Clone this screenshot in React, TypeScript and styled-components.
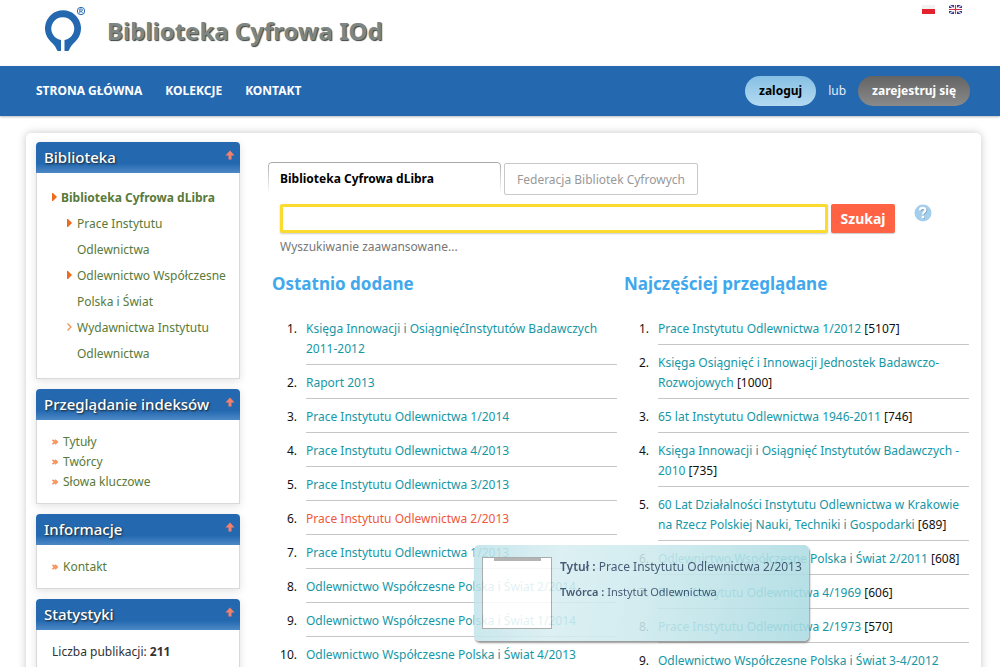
import React from "react";
import styled, { createGlobalStyle, css } from "styled-components";

const GlobalStyle = createGlobalStyle`
  *, *::before, *::after { box-sizing: border-box; }
  body {
    margin: 0;
    background: #fff;
    color: #111;
    font: 12px/20px "Noto Sans", "Open Sans", sans-serif;
  }
  a { text-decoration: none; }
  ul, ol { list-style: none; margin: 0; padding: 0; }
`;

const Header = styled.header`
  display: flex;
  align-items: flex-start;
  justify-content: space-between;
  height: 66px;
  padding: 5px 38px 0 44px;
`;

const Brand = styled.a`
  display: flex;
  align-items: flex-start;
  gap: 21px;
`;

const SiteTitle = styled.span`
  padding-top: 12px;
  color: #7d8683;
  font-size: 24px;
  line-height: 28px;
  font-weight: 700;
  text-shadow: 1px 1px 1px #3b4340;
`;

const Languages = styled.div`
  display: flex;
  gap: 14px;
`;

const FlagLink = styled.a`
  display: block;
  height: 9px;
  svg { display: block; }
`;

const NavBar = styled.nav`
  display: flex;
  align-items: center;
  justify-content: space-between;
  height: 50px;
  padding: 0 30px 0 36px;
  background: #2469b0;
  box-shadow: 0 1px 2px #bbb;
`;

const NavLinks = styled.div`
  display: flex;
  gap: 23px;
`;

const NavLink = styled.a`
  color: #fff;
  font-weight: 700;
`;

const Account = styled.div`
  display: flex;
  align-items: center;
  gap: 12px;
  color: #e4eefa;
`;

const PillButton = styled.button<{ $tone: "light" | "dark" }>`
  height: 30px;
  padding: 0 14px;
  border: 0;
  border-radius: 15px;
  font: inherit;
  font-weight: 700;
  cursor: pointer;
  ${({ $tone }) =>
    $tone === "light"
      ? css`
          color: #000;
          background: linear-gradient(#86c0e4, #b4daf1);
        `
      : css`
          color: #fff;
          background: linear-gradient(#646464, #8a8a8a);
        `}
`;

const Page = styled.main`
  display: flex;
  align-items: flex-start;
  margin: 17px 19px 0 26px;
  padding: 9px 12px 24px 10px;
  background: #fff;
  border-radius: 5px;
  box-shadow: 0 0 8px rgba(0, 0, 0, 0.22);
`;

const Sidebar = styled.aside`
  display: flex;
  flex-direction: column;
  gap: 10px;
  flex: 0 0 204px;
`;

const PanelBox = styled.section`
  box-shadow: 0 2px 8px rgba(0, 0, 0, 0.12);
`;

const PanelHead = styled.header`
  display: flex;
  justify-content: space-between;
  height: 31px;
  padding: 0 5px 0 8px;
  border-radius: 4px 4px 0 0;
  background: linear-gradient(#2469b0 70%, #4d88c6);
`;

const PanelTitle = styled.h2`
  margin: 0;
  color: #fff;
  font-size: 15px;
  line-height: 31px;
  font-weight: 500;
  text-shadow: 1px 1px 2px #222;
`;

const CollapseButton = styled.button`
  width: 10px;
  height: 10px;
  margin-top: 8px;
  padding: 0;
  border: 0;
  background: none;
  cursor: pointer;
  svg { display: block; }
`;

const PanelBody = styled.div`
  padding: 12px 10px 11px 15px;
  border: 1px solid #d9d9d9;
  border-top: 0;
  background: #fff;
  color: #333;
`;

const TreeItem = styled.li<{ $root?: boolean }>`
  display: flex;
  align-items: flex-start;
  gap: ${({ $root }) => ($root ? 4 : 5)}px;
  padding-left: ${({ $root }) => ($root ? 0 : 15)}px;
  line-height: 26px;
  font-weight: ${({ $root }) => ($root ? 700 : 400)};
  svg { flex: none; margin-top: 8px; }
`;

const GreenLink = styled.a`
  color: #587a3a;
`;

const FlatItem = styled.li`
  display: flex;
  align-items: center;
  gap: 4px;
`;

const Content = styled.div`
  flex: 1;
  min-width: 0;
  padding-top: 20px;
`;

const Tabs = styled.div`
  display: flex;
  align-items: flex-start;
  gap: 3px;
  padding-left: 28px;
`;

const Tab = styled.button<{ $active?: boolean }>`
  height: 32px;
  background: #fff;
  font: inherit;
  text-align: left;
  cursor: pointer;
  ${({ $active }) =>
    $active
      ? css`
          position: relative;
          width: 233px;
          padding: 2px 12px 0;
          border: 0;
          color: #000;
          font-weight: 700;
          &::before {
            content: "";
            position: absolute;
            inset: 0;
            border: 1px solid #a8a8a8;
            border-bottom: 0;
            border-radius: 4px 4px 0 0;
            mask-image: linear-gradient(#000, transparent);
          }
        `
      : css`
          margin-top: 1px;
          padding: 1px 12px 0;
          border: 1px solid #c8c8c8;
          border-radius: 2px;
          color: #999;
        `}
`;

const SearchForm = styled.form`
  display: flex;
  align-items: flex-start;
  margin: 9px 37px 0 40px;
`;

const SearchInput = styled.input`
  flex: 1;
  min-width: 0;
  height: 29px;
  margin-right: 3px;
  padding: 0 6px;
  border: 3px solid #fbdc2e;
  border-radius: 2px;
  outline: 0;
  background: #fff;
  font: inherit;
  box-shadow: 0 1px 2px #ccc;
`;

const SearchButton = styled.button`
  width: 64px;
  height: 29px;
  padding: 0;
  border: 0;
  border-radius: 2px;
  background: #ff6344;
  color: #fff;
  font: inherit;
  font-size: 14px;
  font-weight: 700;
  box-shadow: 0 1px 1px #ccc;
  cursor: pointer;
`;

const HelpLink = styled.a`
  width: 18px;
  height: 18px;
  margin-left: 19px;
  svg { display: block; }
`;

const Advanced = styled.a`
  display: block;
  margin: 4px 0 0 40px;
  color: #777;
`;

const Columns = styled.div`
  display: grid;
  grid-template-columns: 1fr 1fr;
  gap: 7px;
  margin: 17px 0 0 32px;
`;

const ColumnTitle = styled.h2`
  margin: 0;
  color: #42a8ec;
  font-size: 17px;
  line-height: 20px;
  font-weight: 700;
`;

const RankList = styled.ol`
  margin-top: 17px;
`;

const RankItem = styled.li`
  position: relative;
  display: flex;
  gap: 9px;
`;

const Rank = styled.span`
  flex: 0 0 25px;
  padding-top: 8px;
  text-align: right;
`;

const Entry = styled.div`
  flex: 1;
  min-width: 0;
  padding: 8px 0 5px;
  border-bottom: 1px solid #c6c6c6;
`;

const EntryLink = styled.a<{ $hovered?: boolean }>`
  color: ${({ $hovered }) => ($hovered ? "#f0583a" : "#1597a6")};
`;

const Tooltip = styled.div`
  position: absolute;
  z-index: 2;
  top: 44px;
  left: 202px;
  display: flex;
  gap: 8px;
  width: 335px;
  height: 96px;
  padding: 12px 8px;
  border-radius: 5px;
  background: linear-gradient(100deg, #bfe3ea, #d8eef2 25%, #cdeaee 50%, #aadbe2);
  box-shadow: 1px 2px 2px #888;
  opacity: 0.87;
`;

const Cover = styled.div`
  display: flex;
  justify-content: center;
  flex: none;
  width: 70px;
  height: 72px;
  border: 1px solid #a0a0a0;
  background: #fff;
  &::before {
    content: "";
    width: 47px;
    height: 3px;
    background: #aaa;
  }
`;

const Details = styled.div`
  color: #2c4563;
  b { font-weight: 600; }
`;

const DetailLine = styled.p<{ $small?: boolean }>`
  margin: 0 0 5px;
  font-size: ${({ $small }) => ($small ? 11 : 12)}px;
  white-space: nowrap;
`;

const Logo = () => (
  <svg width="42" height="48" viewBox="0 0 42 48" aria-hidden="true">
    <path
      d="M17 46 H14.500 C13.500 46 13 45.500 12.500 44 C11 40 7 37.500 4.500 34 A18 18 0 1 1 33.500 34 C31 37.500 27 40 25.500 44 C25 45.500 24.500 46 23.500 46 H20.500 V35 A11.500 11.500 0 1 0 17 35 Z"
      fill="#2469b0"
    />
    <circle cx="37" cy="6" r="3.700" fill="none" stroke="#2469b0" />
    <path d="M35.800 8.200 V4 H37.300 A1 1 0 0 1 37.300 6.200 H36 M37.300 6.200 L38.600 8.200" fill="none" stroke="#2469b0" strokeWidth=".9" />
  </svg>
);

const PolishFlag = () => (
  <svg width="13" height="9" viewBox="0 0 13 9" aria-hidden="true">
    <rect width="13" height="9" fill="#f3f1f1" />
    <rect y="4" width="13" height="5" fill="#e2222e" />
  </svg>
);

const BritishFlag = () => (
  <svg width="13" height="9" viewBox="0 0 13 9" aria-hidden="true">
    <rect width="13" height="9" fill="#333a86" />
    <path d="M0 0 L13 9 M13 0 L0 9" stroke="#dfe0f2" strokeWidth="1.400" />
    <path d="M6.500 0 V9 M0 4.500 H13" stroke="#fff" strokeWidth="3" />
    <path d="M6.500 0 V9 M0 4.500 H13" stroke="#dc3048" strokeWidth="1.200" />
  </svg>
);

const UpArrow = () => (
  <svg width="10" height="10" viewBox="0 0 10 10" aria-hidden="true">
    <path d="M5 0.500 L9.500 5.500 H6.500 V9.500 H3.500 V5.500 H0.500 Z" fill="#f4816b" />
  </svg>
);

const TreeMarker = ({ open }: { open?: boolean }) => (
  <svg width="5" height="9" viewBox="0 0 5 9" aria-hidden="true">
    {open ? (
      <path d="M.5 .5 L4 4 L.5 7.500" fill="none" stroke="#f0904e" strokeWidth="1.200" />
    ) : (
      <path d="M0 0 H1 L5 4 L1 8 H0 Z" fill="#ee6a1c" />
    )}
  </svg>
);

const Chevrons = () => (
  <svg width="7" height="6" viewBox="0 0 7 6" aria-hidden="true">
    <path d="M.5 .8 L2.700 3 L.5 5.200 M3 .8 L5.200 3 L3 5.200" fill="none" stroke="#f7925a" strokeWidth="1.700" />
  </svg>
);

const HelpIcon = () => (
  <svg width="18" height="18" viewBox="0 0 18 18" aria-hidden="true">
    <circle cx="9" cy="9" r="8.500" fill="#a3cfec" />
    <path d="M6.800 7 C6.800 3.600 12.300 3.600 12.300 6.600 C12.300 8.500 9.800 8.600 9.800 10.800" fill="none" stroke="#6c93b4" strokeWidth="2" />
    <circle cx="9.700" cy="13.700" r="1.300" fill="#6c93b4" />
    <path d="M6 6.500 C6 3.100 11.500 3.100 11.500 6.100 C11.500 8 9 8.100 9 10.500" fill="none" stroke="#fff" strokeWidth="2.200" />
    <circle cx="9" cy="13.200" r="1.400" fill="#fff" />
  </svg>
);

const Panel = ({ title, children }: { title: string; children: React.ReactNode }) => (
  <PanelBox>
    <PanelHead>
      <PanelTitle>{title}</PanelTitle>
      <CollapseButton type="button" aria-label={`Zwiń: ${title}`}>
        <UpArrow />
      </CollapseButton>
    </PanelHead>
    <PanelBody>{children}</PanelBody>
  </PanelBox>
);

const FlatList = ({ items }: { items: string[] }) => (
  <ul>
    {items.map((item) => (
      <FlatItem key={item}>
        <Chevrons />
        <GreenLink href="#">{item}</GreenLink>
      </FlatItem>
    ))}
  </ul>
);

type Publication = { title: string; views?: number };

const recent: Publication[] = [
  { title: "Księga Innowacji i OsiągnięćInstytutów Badawczych 2011-2012" },
  { title: "Raport 2013" },
  { title: "Prace Instytutu Odlewnictwa 1/2014" },
  { title: "Prace Instytutu Odlewnictwa 4/2013" },
  { title: "Prace Instytutu Odlewnictwa 3/2013" },
  { title: "Prace Instytutu Odlewnictwa 2/2013" },
  { title: "Prace Instytutu Odlewnictwa 1/2013" },
  { title: "Odlewnictwo Współczesne Polska i Świat 2/2014" },
  { title: "Odlewnictwo Współczesne Polska i Świat 1/2014" },
  { title: "Odlewnictwo Współczesne Polska i Świat 4/2013" },
];

const popular: Publication[] = [
  { title: "Prace Instytutu Odlewnictwa 1/2012", views: 5107 },
  { title: "Księga Osiągnięć i Innowacji Jednostek Badawczo-Rozwojowych", views: 1000 },
  { title: "65 lat Instytutu Odlewnictwa 1946-2011", views: 746 },
  { title: "Księga Innowacji i Osiągnięć Instytutów Badawczych - 2010", views: 735 },
  { title: "60 Lat Działalności Instytutu Odlewnictwa w Krakowie na Rzecz Polskiej Nauki, Techniki i Gospodarki", views: 689 },
  { title: "Odlewnictwo Współczesne Polska i Świat 2/2011", views: 608 },
  { title: "Prace Instytutu Odlewnictwa 4/1969", views: 606 },
  { title: "Prace Instytutu Odlewnictwa 2/1973", views: 570 },
  { title: "Odlewnictwo Współczesne Polska i Świat 3-4/2012" },
];

const PublicationColumn = ({ title, items, hovered }: { title: string; items: Publication[]; hovered?: number }) => (
  <section>
    <ColumnTitle>{title}</ColumnTitle>
    <RankList>
      {items.map((item, index) => (
        <RankItem key={item.title}>
          <Rank>{index + 1}.</Rank>
          <Entry>
            <EntryLink href="#" $hovered={index === hovered}>
              {item.title}
            </EntryLink>
            {item.views && ` [${item.views}]`}
          </Entry>
          {index === hovered && (
            <Tooltip role="tooltip">
              <Cover />
              <Details>
                <DetailLine>
                  <b>Tytuł :</b> {item.title}
                </DetailLine>
                <DetailLine $small>
                  <b>Twórca :</b> Instytut Odlewnictwa
                </DetailLine>
              </Details>
            </Tooltip>
          )}
        </RankItem>
      ))}
    </RankList>
  </section>
);

export default function App() {
  return (
    <>
      <GlobalStyle />
      <Header>
        <Brand href="#">
          <Logo />
          <SiteTitle>Biblioteka Cyfrowa IOd</SiteTitle>
        </Brand>
        <Languages>
          <FlagLink href="#" aria-label="Polski">
            <PolishFlag />
          </FlagLink>
          <FlagLink href="#" aria-label="English">
            <BritishFlag />
          </FlagLink>
        </Languages>
      </Header>
      <NavBar>
        <NavLinks>
          <NavLink href="#">STRONA GŁÓWNA</NavLink>
          <NavLink href="#">KOLEKCJE</NavLink>
          <NavLink href="#">KONTAKT</NavLink>
        </NavLinks>
        <Account>
          <PillButton type="button" $tone="light">zaloguj</PillButton>
          <span>lub</span>
          <PillButton type="button" $tone="dark">zarejestruj się</PillButton>
        </Account>
      </NavBar>
      <Page>
        <Sidebar>
          <Panel title="Biblioteka">
            <ul>
              <TreeItem $root>
                <TreeMarker />
                <GreenLink href="#">Biblioteka Cyfrowa dLibra</GreenLink>
              </TreeItem>
              <TreeItem>
                <TreeMarker />
                <GreenLink href="#">Prace Instytutu Odlewnictwa</GreenLink>
              </TreeItem>
              <TreeItem>
                <TreeMarker />
                <GreenLink href="#">Odlewnictwo Współczesne Polska i Świat</GreenLink>
              </TreeItem>
              <TreeItem>
                <TreeMarker open />
                <GreenLink href="#">Wydawnictwa Instytutu Odlewnictwa</GreenLink>
              </TreeItem>
            </ul>
          </Panel>
          <Panel title="Przeglądanie indeksów">
            <FlatList items={["Tytuły", "Twórcy", "Słowa kluczowe"]} />
          </Panel>
          <Panel title="Informacje">
            <FlatList items={["Kontakt"]} />
          </Panel>
          <Panel title="Statystyki">
            Liczba publikacji: <b>211</b>
          </Panel>
        </Sidebar>
        <Content>
          <Tabs role="tablist">
            <Tab type="button" role="tab" aria-selected="true" $active>Biblioteka Cyfrowa dLibra</Tab>
            <Tab type="button" role="tab" aria-selected="false">Federacja Bibliotek Cyfrowych</Tab>
          </Tabs>
          <SearchForm>
            <SearchInput type="text" aria-label="Szukaj w bibliotece" />
            <SearchButton type="submit">Szukaj</SearchButton>
            <HelpLink href="#" aria-label="Pomoc">
              <HelpIcon />
            </HelpLink>
          </SearchForm>
          <Advanced href="#">Wyszukiwanie zaawansowane...</Advanced>
          <Columns>
            <PublicationColumn title="Ostatnio dodane" items={recent} hovered={5} />
            <PublicationColumn title="Najczęściej przeglądane" items={popular} />
          </Columns>
        </Content>
      </Page>
    </>
  );
}
